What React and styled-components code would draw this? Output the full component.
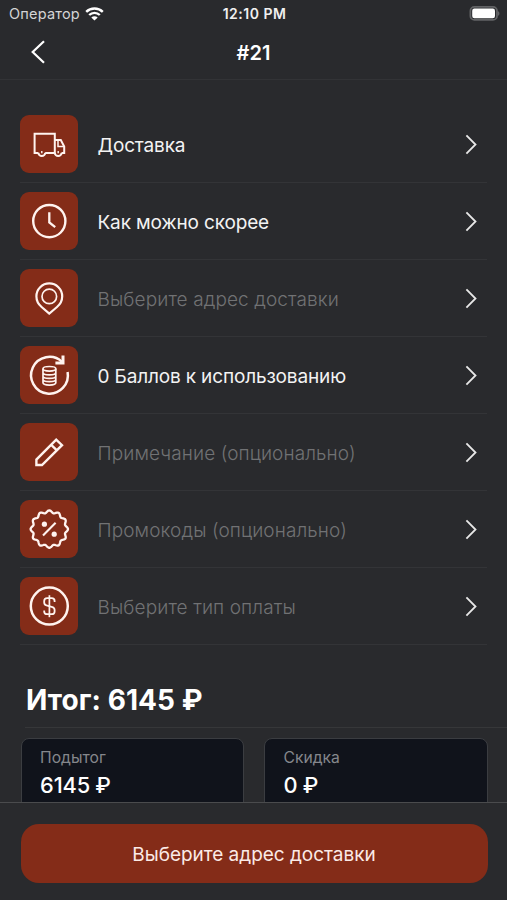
import React from "react";

import styled, { createGlobalStyle } from "styled-components";

const GlobalStyle = createGlobalStyle`
  * {
    box-sizing: border-box;
  }

  body {
    margin: 0;
    background: #292a2d;
    font-family: "Inter", "Liberation Sans", sans-serif;
    color: #ffffff;
  }
`;

const Screen = styled.div`
  display: flex;
  flex-direction: column;
  height: 900px;
  overflow: hidden;
  background: #292a2d;
`;

const StatusBar = styled.div`
  display: grid;
  grid-template-columns: 1fr auto 1fr;
  align-items: center;
  height: 27px;
  padding: 0 7px 0 9px;
  flex-shrink: 0;
`;

const Carrier = styled.div`
  display: flex;
  align-items: center;
  gap: 5px;
  font-size: 14.5px;
  line-height: 18px;
  letter-spacing: 0.2px;
  color: #d4d4d5;
`;

const Clock = styled.div`
  font-weight: 600;
  font-size: 14px;
  line-height: 18px;
  letter-spacing: 0.5px;
  color: #f0f0f0;
`;

const BatterySlot = styled.div`
  display: flex;
  justify-content: flex-end;
`;

const Header = styled.header`
  display: grid;
  grid-template-columns: 1fr auto 1fr;
  align-items: center;
  height: 53px;
  padding: 0 30px 2px;
  border-bottom: 1px solid #323336;
  flex-shrink: 0;
`;

const BackButton = styled.button`
  display: flex;
  width: 16px;
  padding: 0;
  border: 0;
  background: none;
`;

const HeaderTitle = styled.h1`
  margin: 0;
  padding-top: 1px;
  font-weight: 600;
  font-size: 20px;
  line-height: 24px;
`;

const Content = styled.main`
  flex: 1;
  min-height: 0;
  overflow: hidden;
  padding-top: 26px;
`;

const Options = styled.div`
  padding: 0 20px;
`;

const OptionRow = styled.div`
  display: flex;
  align-items: center;
  height: 77px;
  padding-right: 9px;
  border-bottom: 1px solid #333437;
`;

const IconTile = styled.div`
  width: 58px;
  height: 58px;
  border-radius: 9px;
  background: #842c18;
`;

const OptionLabel = styled.div`
  flex: 1;
  margin-left: 19.5px;
  padding-top: 3px;
  font-size: 19px;
  line-height: 24px;
  letter-spacing: ${({ $muted }) => ($muted ? 0.1 : -0.15)}px;
  color: ${({ $muted }) => ($muted ? "#717274" : "#f3f3f3")};
  font-weight: ${({ $muted }) => ($muted ? 300 : 400)};
`;

const Total = styled.div`
  height: 83px;
  margin-left: 25px;
  padding: 38px 0 0 1px;
  border-bottom: 1px solid #363739;
  font-weight: 700;
  font-size: 28px;
  line-height: 34px;
  letter-spacing: 0.08px;
`;

const Cards = styled.div`
  display: grid;
  grid-template-columns: 1fr 1fr;
  gap: 20px;
  padding: 10px 19.5px 0 20.5px;
`;

const Card = styled.div`
  height: 90px;
  padding: 9px 18.5px;
  border: 1px solid #3b3d41;
  border-radius: 8px;
  background: #10131b;
`;

const CardLabel = styled.div`
  font-size: 15.7px;
  line-height: 20px;
  color: #85878c;
`;

const CardValue = styled.div`
  margin-top: 3px;
  font-weight: 500;
  font-size: 21.8px;
  line-height: 28px;
  letter-spacing: -0.1px;
  word-spacing: -0.5px;
`;

const Footer = styled.footer`
  height: 98px;
  padding: 21px 19.5px 0 20.5px;
  border-top: 1px solid #4a4b4d;
  background: #292a2d;
  flex-shrink: 0;
`;

const SubmitButton = styled.button`
  display: block;
  width: 100%;
  height: 59px;
  padding: 2px 0 0;
  border: 0;
  border-radius: 18px;
  background: #842c18;
  color: #fbeae6;
  font-family: inherit;
  font-size: 19px;
  letter-spacing: -0.03px;
`;

const TileSvg = ({ children }) => (
  <svg
    width={58}
    height={58}
    viewBox="-0.6 -0.4 58 58"
    fill="none"
    stroke="#fff3ef"
    strokeWidth={2}
    display="block"
  >
    {children}
  </svg>
);

const TruckIcon = () => (
  <TileSvg>
    <path d="M17.8 37.5H14V18.4H34.2V37.5H24.6" />
    <path d="M34.2 24.6H40.2L43.6 31.2V37.5H41" />
    <path d="M37.4 25V31.2H43.3" strokeWidth={1.5} />
    <path d="M17.8 37.3A3.4 3.4 0 0 0 24.6 37.3M34.2 37.3A3.4 3.4 0 0 0 41 37.3" />
    <path d="M21.2 35.6V37.8M37.6 35.6V37.8" strokeWidth={1.4} />
  </TileSvg>
);

const ClockIcon = () => (
  <TileSvg>
    <circle cx="28.7" cy="28.7" r="16.1" strokeWidth={2.4} />
    <path d="M28.7 19.8V30L34.6 34.8" strokeWidth={2.3} />
  </TileSvg>
);

const PinIcon = () => (
  <TileSvg>
    <path
      d="M28.7 44.2L21 37.6C17.6 34.8 15.8 31.2 15.8 26.9A12.9 12.9 0 0 1 41.6 26.9C41.6 31.2 39.8 34.8 36.4 37.6Z"
      strokeWidth={2.2}
    />
    <circle cx="28.7" cy="27" r="7.3" strokeWidth={1.7} />
  </TileSvg>
);

const PointsIcon = () => (
  <TileSvg>
    <path d="M47 25.6A18.4 18.4 0 1 1 41.4 15.4" strokeWidth={2.5} />
    <path d="M42.4 9.2V16.6H34.8" strokeWidth={3} />
    <ellipse cx="28.8" cy="22.4" rx="6.4" ry="2.3" strokeWidth={1.7} />
    <path
      d="M22.4 22.4V36.4C22.4 39.4 35.2 39.4 35.2 36.4V22.4M22.4 26.4C22.4 29.2 35.2 29.2 35.2 26.4M22.4 29.8C22.4 32.6 35.2 32.6 35.2 29.8M22.4 33.2C22.4 36 35.2 36 35.2 33.2"
      strokeWidth={1.7}
    />
  </TileSvg>
);

const PencilIcon = () => (
  <TileSvg>
    <path d="M15.8 41.6V36.2L35.6 16.2L41.4 21.8L21.4 41.6ZM30.6 21.4L36.3 27" strokeWidth={2.4} />
  </TileSvg>
);

const scallop = Array.from({ length: 144 }, (_, i) => {
  const angle = (i / 144) * Math.PI * 2;
  const radius = 17.5 + 1.2 * Math.cos(12 * angle);
  const x = 28.7 + radius * Math.sin(angle);
  const y = 28.7 - radius * Math.cos(angle);
  return `${x.toFixed(2)},${y.toFixed(2)}`;
}).join(" ");

const PromoIcon = () => (
  <TileSvg>
    <polygon points={scallop} strokeWidth={2.3} strokeLinejoin="round" />
    <path d="M22.4 35.2L35 22.4" strokeWidth={2.1} />
    <circle cx="23.8" cy="23.8" r="2.6" fill="#fff3ef" stroke="none" />
    <circle cx="33.6" cy="33.8" r="2.6" fill="#fff3ef" stroke="none" />
  </TileSvg>
);

const DollarIcon = () => (
  <TileSvg>
    <circle cx="28.7" cy="28.7" r="18.5" strokeWidth={2.5} />
    <path
      d="M34 24.6V23.6C34 21.8 32.8 20.8 31 20.8H26.6C24.8 20.8 23.6 21.9 23.6 23.7V25C23.6 26.6 24.4 27.5 25.9 28L31.8 29.8C33.3 30.3 34 31.2 34 32.7V34C34 35.8 32.8 36.8 31 36.8H26.6C24.8 36.8 23.6 35.8 23.6 34V33"
      strokeWidth={1.8}
    />
    <path d="M28.8 17.8V39.8" strokeWidth={1.7} />
  </TileSvg>
);

const ChevronRight = () => (
  <svg width={14} height={22} viewBox="0 0 14 22" fill="none">
    <path d="M2.4 2.3L11.5 11.5L2.4 20.7" stroke="#e8e8e8" strokeWidth={1.8} />
  </svg>
);

const ChevronLeft = () => (
  <svg width={16} height={24} viewBox="0 0 16 24" fill="none">
    <path d="M14 1.2L2.7 12L14 22.8" stroke="#ffffff" strokeWidth={2.2} />
  </svg>
);

const WifiIcon = () => (
  <svg width={19} height={14} viewBox="0 0 19 14" fill="none">
    <path
      d="M1.2 4.8C5.8 0.3 13.2 0.3 17.8 4.8M4.2 8C7.2 5.1 11.8 5.1 14.8 8"
      stroke="#ffffff"
      strokeWidth={2.4}
    />
    <path d="M9.5 13.6L6.3 10.5C8.1 8.9 10.9 8.9 12.7 10.5Z" fill="#ffffff" />
  </svg>
);

const BatteryIcon = () => (
  <svg width={31} height={15} viewBox="0 0 31 15" fill="none">
    <rect x="1.4" y="0.9" width="26.6" height="13" rx="4" stroke="#626365" strokeWidth={1.8} />
    <rect x="3.2" y="2.6" width="22.8" height="9.6" rx="2.2" fill="#ffffff" />
    <path d="M28.8 5V10C31 9.2 31 5.8 28.8 5Z" fill="#626365" />
  </svg>
);

const options = [
  { label: "Доставка", Icon: TruckIcon },
  { label: "Как можно скорее", Icon: ClockIcon },
  { label: "Выберите адрес доставки", Icon: PinIcon, muted: true },
  { label: "0 Баллов к использованию", Icon: PointsIcon },
  { label: "Примечание (опционально)", Icon: PencilIcon, muted: true },
  { label: "Промокоды (опционально)", Icon: PromoIcon, muted: true },
  { label: "Выберите тип оплаты", Icon: DollarIcon, muted: true },
];

const App = () => (
  <>
    <GlobalStyle />
    <Screen>
      <StatusBar>
        <Carrier>
          Оператор
          <WifiIcon />
        </Carrier>
        <Clock>12:10 PM</Clock>
        <BatterySlot>
          <BatteryIcon />
        </BatterySlot>
      </StatusBar>
      <Header>
        <BackButton>
          <ChevronLeft />
        </BackButton>
        <HeaderTitle>#21</HeaderTitle>
      </Header>
      <Content>
        <Options>
          {options.map(({ label, Icon, muted }) => (
            <OptionRow key={label}>
              <IconTile>
                <Icon />
              </IconTile>
              <OptionLabel $muted={muted}>{label}</OptionLabel>
              <ChevronRight />
            </OptionRow>
          ))}
        </Options>
        <Total>Итог: 6145 ₽</Total>
        <Cards>
          <Card>
            <CardLabel>Подытог</CardLabel>
            <CardValue>6145 ₽</CardValue>
          </Card>
          <Card>
            <CardLabel>Скидка</CardLabel>
            <CardValue>0 ₽</CardValue>
          </Card>
        </Cards>
      </Content>
      <Footer>
        <SubmitButton>Выберите адрес доставки</SubmitButton>
      </Footer>
    </Screen>
  </>
);

export default App;
